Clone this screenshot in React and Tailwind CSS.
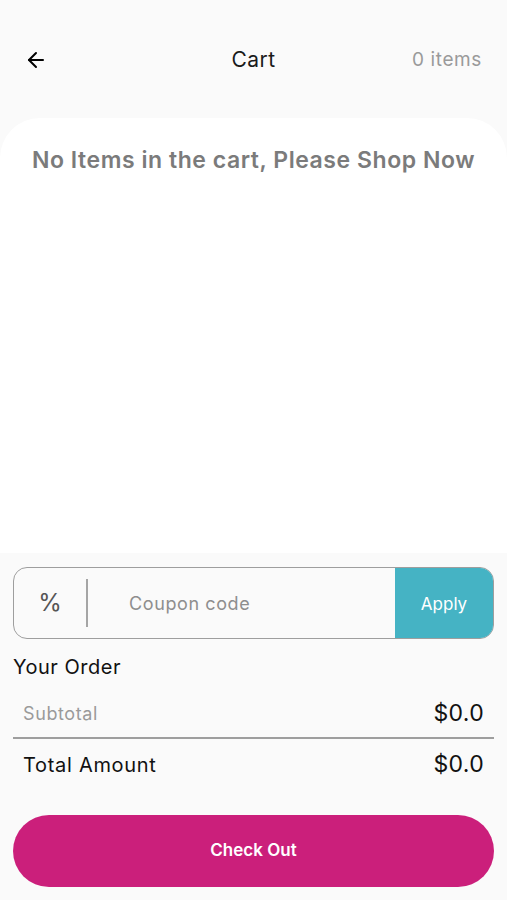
import { ArrowLeft } from 'lucide-react';

const font = { fontFamily: '"Inter", "Noto Sans", sans-serif' };

export default function App() {
  return (
    <div className="w-[507px] h-[900px] bg-[#fafafa] flex flex-col overflow-hidden" style={font}>
      {/* status bar space */}
      <div className="h-[30px] shrink-0" />

      {/* Header */}
      <div className="h-[60px] shrink-0 flex items-center justify-between px-[24px] relative">
        <ArrowLeft className="w-[24px] h-[24px] text-black" strokeWidth={2} />
        <span className="absolute left-1/2 -translate-x-1/2 text-[21px] tracking-[0.4px] text-[#1a1a1a]">Cart</span>
        <span className="text-[19px] tracking-[0.6px] text-[#9a9a9a] mr-[1px]">0 items</span>
      </div>

      {/* Empty list card */}
      <div className="mt-[28px] h-[435px] shrink-0 bg-white rounded-t-[40px] flex justify-center pt-[25px]">
        <p className="text-[23px] font-semibold text-[#7b7b7b] tracking-[0.55px]">
          No Items in the cart, Please Shop Now
        </p>
      </div>

      {/* Bottom section */}
      <div className="flex-1 flex flex-col px-[13px] pt-[14px]">
        <div className="h-[72px] flex border border-[#9e9e9e] rounded-[14px] overflow-hidden">
          <div className="w-[72px] flex items-center justify-center text-[24px] text-[#555]">%</div>
          <div className="w-[2px] bg-[#a5a5a5] my-[11px]" />
          <div className="flex-1 flex items-center pl-[41px] text-[18px] tracking-[0.6px] text-[#8e8e8e]">Coupon code</div>
          <button className="w-[98px] bg-[#45b3c4] text-white text-[17px] pt-[3px] flex items-center justify-center">Apply</button>
        </div>

        <div className="mt-[13px] text-[20px] tracking-[0.5px] text-[#111]">Your Order</div>

        <div className="mt-[16px] flex items-center justify-between pl-[10px] pr-[10px] h-[30px]">
          <span className="text-[18px] tracking-[0.6px] text-[#9a9a9a]">Subtotal</span>
          <span className="text-[23px] tracking-[0.3px] text-[#111]">$0.0</span>
        </div>

        <div className="mt-[9px] h-[1.5px] bg-[#9e9e9e]" />

        <div className="mt-[11px] flex items-center justify-between pl-[10px] pr-[10px] h-[30px]">
          <span className="text-[20px] tracking-[0.7px] text-[#111]">Total Amount</span>
          <span className="text-[23px] tracking-[0.3px] text-[#111]">$0.0</span>
        </div>

        <button className="mt-[35px] h-[72px] rounded-full bg-[#cb1f7b] text-white text-[17px] font-semibold flex items-center justify-center">
          Check Out
        </button>
      </div>
    </div>
  );
}
